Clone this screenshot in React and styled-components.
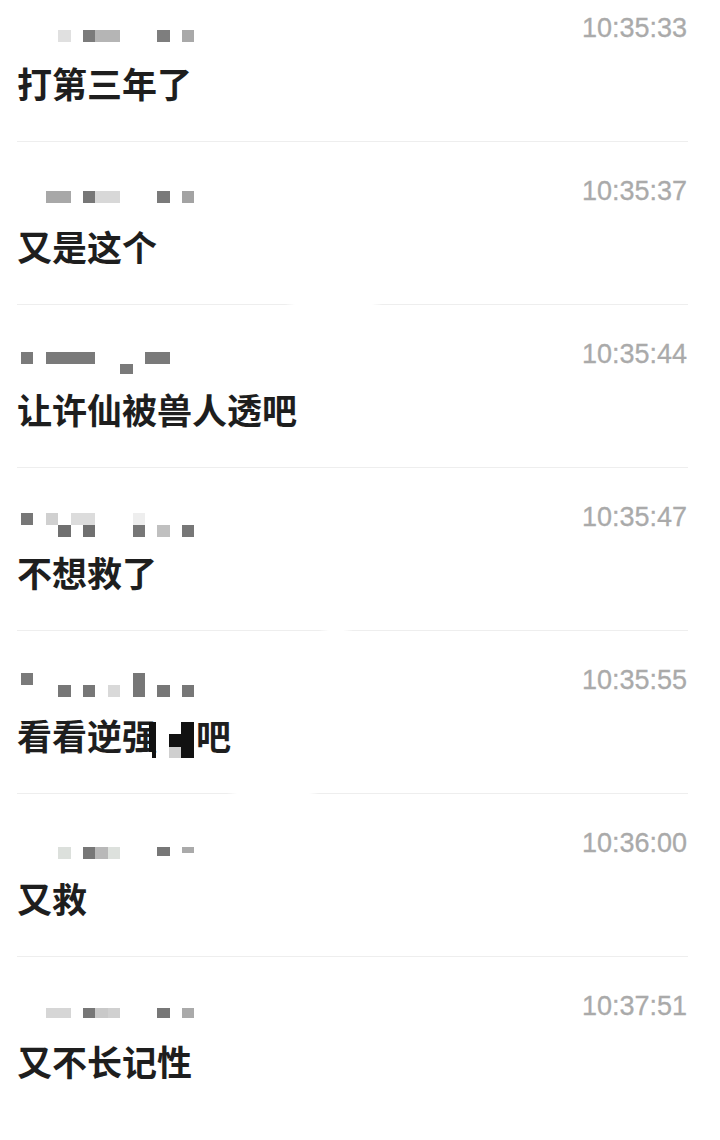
import React from "react";
import styled, { createGlobalStyle } from "styled-components";

const Global = createGlobalStyle`
  html, body { margin: 0; padding: 0; background: #ffffff; }
  body { font-family: "Liberation Sans", "Noto Sans CJK SC", sans-serif; }
`;

const List = styled.div`
  display: flex;
  flex-direction: column;
  padding: 0 32px 0 17px;
  background: #ffffff;
`;

const Row = styled.div`
  display: flex;
  flex-direction: column;
  padding-top: ${(p) => (p.$first ? 11 : 32)}px;
`;

const Header = styled.div`
  display: flex;
  justify-content: space-between;
  align-items: flex-start;
  height: 34px;
`;

const Time = styled.span`
  font-family: "Liberation Sans", Arial, sans-serif;
  font-size: 27px;
  line-height: 34px;
  color: #aaaaaa;
  padding-right: 1px;
  -webkit-text-stroke: 0.3px #aaaaaa;
`;

const Mosaic = styled.div`
  display: grid;
  grid-template-columns: repeat(15, 12.4px);
  grid-template-rows: 12px 12px;
  margin-top: ${(p) => p.$top}px;
  margin-left: 4px;
`;

const Cell = styled.span`
  grid-column: ${(p) => p.$c + 1} / span ${(p) => p.$span || 1};
  grid-row: ${(p) => p.$r + 1};
  align-self: start;
  height: ${(p) => p.$h || 12}px;
  background: ${(p) => p.$color};
`;

const Message = styled.div`
  margin-top: 16px;
  font-family: "Noto Sans CJK SC", "Noto Sans CJK JP", sans-serif;
  font-weight: 700;
  font-size: 35px;
  line-height: 44px;
  height: 44px;
  color: #1e1e1e;
  white-space: nowrap;
`;

const Censor = styled.svg`
  display: inline-block;
  vertical-align: top;
  margin-top: 9px;
  margin-left: -8px;
  margin-right: 2px;
`;

const Divider = styled.div`
  margin-top: 36px;
  height: 1px;
  background: ${(p) =>
    p.$gap
      ? `linear-gradient(to right, #eeeeee 0, #eeeeee ${p.$gap[0]}px, rgba(238,238,238,0) ${p.$gap[0] + 10}px, rgba(238,238,238,0) ${p.$gap[1] - 10}px, #eeeeee ${p.$gap[1]}px, #eeeeee 100%)`
      : "#eeeeee"};
`;

const D = "#7a7a7a";

const rows = [
  {
    time: "10:35:33",
    top: 19,
    cells: [
      { c: 3, r: 0, color: "#e0e0e0" },
      { c: 5, r: 0, color: "#7b7b7b" },
      { c: 6, r: 0, span: 2, color: "#b5b5b5" },
      { c: 11, r: 0, color: "#7e7e7e" },
      { c: 13, r: 0, color: "#a9a9a9" },
    ],
    text: "打第三年了",
  },
  {
    time: "10:35:37",
    top: 17,
    cells: [
      { c: 2, r: 0, span: 2, color: "#a8a8a8" },
      { c: 5, r: 0, color: "#777777" },
      { c: 6, r: 0, span: 2, color: "#d8d8d8" },
      { c: 11, r: 0, color: D },
      { c: 13, r: 0, color: "#a3a3a3" },
    ],
    text: "又是这个",
    gap: [268, 365],
  },
  {
    time: "10:35:44",
    top: 15,
    cells: [
      { c: 0, r: 0, color: D },
      { c: 2, r: 0, span: 4, color: D },
      { c: 8, r: 1, h: 10, color: D },
      { c: 10, r: 0, span: 2, color: D },
    ],
    text: "让许仙被兽人透吧",
  },
  {
    time: "10:35:47",
    top: 13,
    cells: [
      { c: 0, r: 0, color: "#777777" },
      { c: 2, r: 0, color: "#d0d0d0" },
      { c: 4, r: 0, span: 2, color: "#dcdcdc" },
      { c: 9, r: 0, color: "#eeeeee" },
      { c: 3, r: 1, color: "#707070" },
      { c: 5, r: 1, color: "#707070" },
      { c: 9, r: 1, color: "#777777" },
      { c: 11, r: 1, color: "#c0c0c0" },
      { c: 13, r: 1, color: "#777777" },
    ],
    text: "不想救了",
    gap: [302, 336],
  },
  {
    time: "10:35:55",
    top: 10,
    cells: [
      { c: 0, r: 0, color: D },
      { c: 9, r: 0, color: "#777777" },
      { c: 3, r: 1, color: "#777777" },
      { c: 5, r: 1, color: "#777777" },
      { c: 7, r: 1, color: "#d9d9d9" },
      { c: 9, r: 1, color: "#777777" },
      { c: 11, r: 1, color: "#777777" },
      { c: 13, r: 1, color: "#777777" },
    ],
    text: "censor",
    gap: [210, 302],
  },
  {
    time: "10:36:00",
    top: 21,
    cells: [
      { c: 3, r: 0, color: "#dce0dc" },
      { c: 5, r: 0, color: "#777777" },
      { c: 6, r: 0, color: "#b8b8b8" },
      { c: 7, r: 0, color: "#dde1dd" },
      { c: 11, r: 0, h: 9, color: "#777777" },
      { c: 13, r: 0, h: 6, color: "#aaaaaa" },
    ],
    text: "又救",
  },
  {
    time: "10:37:51",
    top: 19,
    cells: [
      { c: 2, r: 0, span: 2, h: 10, color: "#d6d6d6" },
      { c: 5, r: 0, h: 10, color: "#777777" },
      { c: 6, r: 0, h: 10, color: "#c9c9c9" },
      { c: 7, r: 0, h: 10, color: "#d0d0d0" },
      { c: 11, r: 0, h: 10, color: "#777777" },
      { c: 13, r: 0, h: 10, color: "#aaaaaa" },
    ],
    text: "又不长记性",
    last: true,
  },
];

function CensoredText() {
  return (
    <>
      看看逆强
      <Censor width="45" height="36" viewBox="0 0 45 36">
        <rect x="0" y="0" width="7" height="30" fill="#111" />
        <rect x="3" y="30" width="4" height="6" fill="#111" />
        <rect x="20" y="12" width="12" height="13" fill="#111" />
        <rect x="20" y="25" width="12" height="11" fill="#cfcfcf" />
        <rect x="32" y="0" width="13" height="36" fill="#111" />
      </Censor>
      吧
    </>
  );
}

export default function App() {
  return (
    <>
      <Global />
      <List>
        {rows.map((row, i) => (
          <Row key={row.time} $first={i === 0}>
            <Header>
              <Mosaic $top={row.top}>
                {row.cells.map((cell, j) => (
                  <Cell
                    key={j}
                    $c={cell.c}
                    $r={cell.r}
                    $span={cell.span}
                    $h={cell.h}
                    $color={cell.color}
                  />
                ))}
              </Mosaic>
              <Time>{row.time}</Time>
            </Header>
            <Message>{row.text === "censor" ? <CensoredText /> : row.text}</Message>
            {!row.last && <Divider $gap={row.gap} />}
          </Row>
        ))}
      </List>
    </>
  );
}
